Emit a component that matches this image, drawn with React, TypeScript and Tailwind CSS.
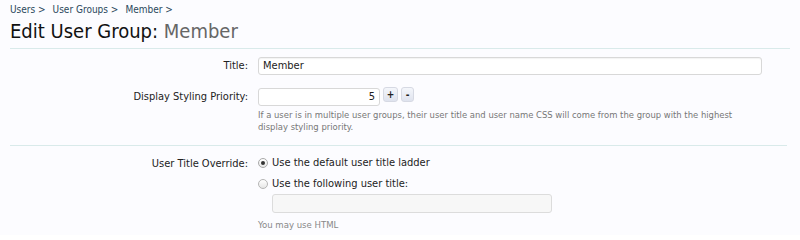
export default function App() {
  const font = "font-['Tahoma','DejaVu_Sans_Condensed','DejaVu_Sans',sans-serif]";
  return (
    <div className={`w-[800px] h-[235px] bg-[#fcfcff] px-[10px] overflow-hidden ${font}`}>
      {/* breadcrumb */}
      <div className="flex gap-[7px] pt-[3px] text-[10px] leading-[13px] text-[#2b485c]">
        <span>Users &gt;</span>
        <span>User Groups &gt;</span>
        <span>Member &gt;</span>
      </div>
      <h1 className="mt-[2px] text-[20px] leading-[26px] text-[#111]">
        Edit User Group: <span className="text-[#666]">Member</span>
      </h1>
      <div className="mt-[4px] border-t border-[#d9eaea]" />

      {/* basic fields */}
      <div className="pt-[8px] pb-[12px] text-[11px] text-[#222]">
        <div className="flex items-center">
          <div className="w-[238px] text-right">Title:</div>
          <div className="ml-[10px] w-[504px]">
            <div className="h-[18px] bg-white border border-[#d8d8d8] rounded-[3px] shadow-[inset_0_1px_1px_rgba(0,0,0,0.05)] px-[4px] leading-[16px]">
              Member
            </div>
          </div>
        </div>
        <div className="flex mt-[12px]">
          <div className="w-[238px] text-right pt-[2px]">Display Styling Priority:</div>
          <div className="ml-[10px]">
            <div className="flex items-start gap-[3px]">
              <div className="w-[122px] h-[18px] bg-white border border-[#d8d8d8] rounded-[3px] px-[4px] text-right leading-[16px] mt-[1px]">
                5
              </div>
              <button className="w-[15px] h-[15px] rounded-[3px] border border-[#d6d9e3] bg-gradient-to-b from-[#f4f6fb] to-[#dfe3ee] text-[10px] leading-[12px] font-bold text-[#222]">
                +
              </button>
              <button className="w-[13px] h-[15px] rounded-[3px] border border-[#d6d9e3] bg-gradient-to-b from-[#f4f6fb] to-[#dfe3ee] text-[10px] leading-[12px] font-bold text-[#222]">
                -
              </button>
            </div>
            <p className="mt-[3px] w-[475px] text-[9.4px] leading-[12px] text-[#777]">
              If a user is in multiple user groups, their user title and user name CSS will come from the group with the highest display styling priority.
            </p>
          </div>
        </div>
      </div>
      <div className="border-t border-[#d9eaea] mr-[3px]" />

      {/* title override */}
      <div className="pt-[10px] text-[11px] text-[#222]">
        <div className="flex">
          <div className="w-[238px] text-right">User Title Override:</div>
          <div className="ml-[10px]">
            <label className="flex items-center gap-[4px] leading-[13px]">
              <span className="w-[10px] h-[10px] rounded-full border border-[#a9a9a9] bg-gradient-to-b from-white to-[#e6e6e6] flex items-center justify-center">
                <span className="w-[4px] h-[4px] rounded-full bg-[#333]" />
              </span>
              Use the default user title ladder
            </label>
            <label className="flex items-center gap-[4px] leading-[13px] mt-[8px]">
              <span className="w-[10px] h-[10px] rounded-full border border-[#b5b5b5] bg-gradient-to-b from-white to-[#e6e6e6]" />
              Use the following user title:
            </label>
            <div className="ml-[14px] mt-[4px] w-[280px] h-[19px] bg-[#f7f7f7] border border-[#dcdcdc] rounded-[3px]" />
            <p className="mt-[6px] text-[9.5px] leading-[12px] text-[#888]">You may use HTML</p>
          </div>
        </div>
      </div>
    </div>
  );
}
